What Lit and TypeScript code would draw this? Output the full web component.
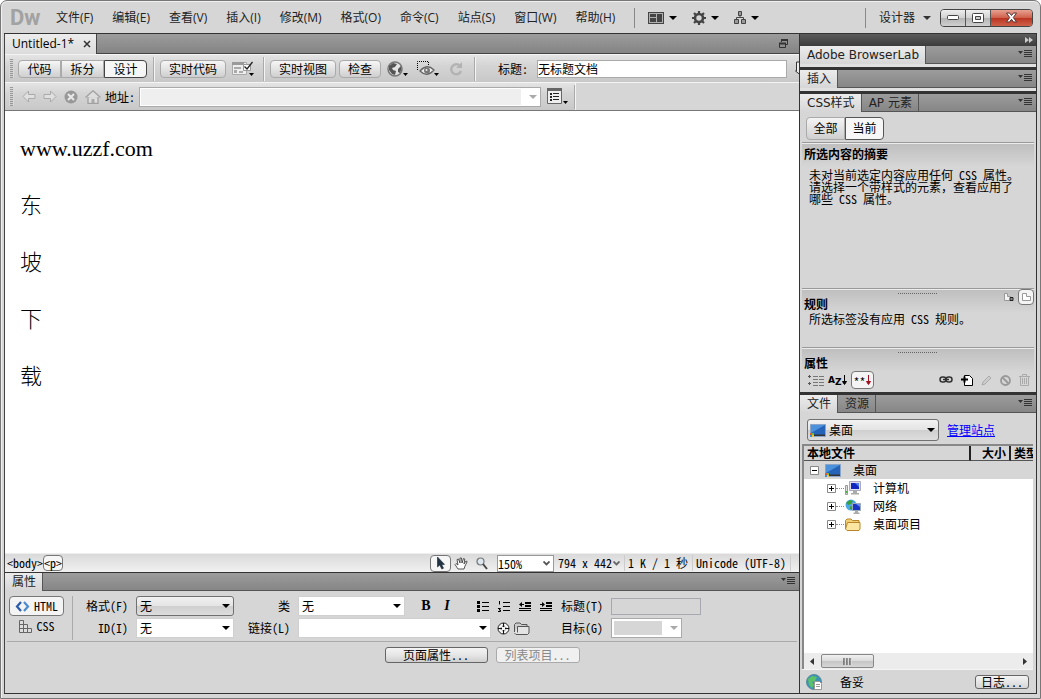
import { LitElement, html, css, svg } from "lit";
import { customElement, property, state } from "lit/decorators.js";
import { classMap } from "lit/directives/class-map.js";

const icon = (w: number, h: number, body: unknown) =>
  html`<svg width=${w} height=${h} viewBox="0 0 ${w} ${h}" aria-hidden="true">${body}</svg>`;

const down = (fill = "#000") => icon(8, 4, svg`<path d="M0 0h8L4 4z" fill=${fill} />`);
const smallDown = (x: number, y: number) => svg`<path d="M${x} ${y}h5l-2.500 3z" fill="#000" />`;

const icons = {
  layout: () => icon(16, 12, svg`<path d="M0 0h16v12H0z" fill="#444"/><path d="M1 1h14v10H1z" fill="#b0b0b0"/><path d="M2 2h6v3H2zM2 6h6v4H2zM9 2h5v8H9z" fill="#444"/>`),
  gear: () => icon(14, 14, svg`<circle cx="7" cy="7" r="4" fill="none" stroke="#444" stroke-width="2.600"/><path d="M7 0v3M7 11v3M0 7h3M11 7h3M2 2l2 2M10 10l2 2M12 2l-2 2M4 10l-2 2" stroke="#444" stroke-width="2.200"/>`),
  sitemap: () => icon(12, 13, svg`<path d="M4.500 .5h3v4h-3zM.5 8.500h4v4h-4zM7.500 8.500h4v4h-4z" fill="#999" stroke="#444"/><path d="M6 5v2M2.500 8V6.500h7V8" fill="none" stroke="#444"/>`),
  restore: () => icon(9, 9, svg`<path d="M2.500 3V1h6v4.500H7" fill="none" stroke="#333"/><path d="M2 1h7" stroke="#333" stroke-width="2"/><path d="M.5 4.500h6v4h-6z" fill="none" stroke="#333"/><path d="M0 4.500h7" stroke="#333" stroke-width="2"/>`),
  close: () => icon(8, 8, svg`<path d="M1 1l6 6M7 1L1 7" stroke="#333" stroke-width="1.500"/>`),
  check: () => icon(22, 16, svg`<path d="M.5 1.500h14v12H.5z" fill="#eee" stroke="#aaa"/><path d="M0 1h12v3H0z" fill="#999"/><path d="M2 6h7v2H2zM2 9h3v3H2zM7 10h4v2H7z" fill="#aaa"/><path d="M11.500 3.500h7v6h-7z" fill="#fff" stroke="#999"/><path d="M12.500 5.500l2.500 2.500L20.500 1" fill="none" stroke="#222" stroke-width="1.300"/>${smallDown(17, 12)}`),
  globe: () => icon(21, 16, svg`<circle cx="8" cy="8" r="7" fill="#e4e4e4" stroke="#777" stroke-width="1.500"/><path d="M2 5l4-3 4 1-2 3-3 1 1 2 3 1-1 4-3-1-3-4zM11 8l3-3 .5 3-1.500 4-2-1z" fill="#555"/>${smallDown(16, 12)}`),
  eye: () => icon(22, 16, svg`<path d="M.5 9V.5h11V4" fill="none" stroke="#000" stroke-dasharray="1 1"/><path d="M3 10Q10 2 17 9Q10 17 3 10z" fill="#eee" stroke="#666" stroke-width="1.300"/><circle cx="10" cy="9.500" r="3" fill="#777"/><circle cx="9.500" cy="9" r="1" fill="#eee"/>${smallDown(17, 12)}`),
  refresh: () => icon(14, 14, svg`<path d="M11 4A5 5 0 1 0 12 9" fill="none" stroke="#b3b3b3" stroke-width="2.500"/><path d="M13 0v6H7z" fill="#b3b3b3"/>`),
  transfer: () => icon(8, 15, svg`<path d="M3.500 1h6v9h3l-5 4-5-4h1z" fill="#eee" stroke="#333"/>`),
  back: () => icon(14, 13, svg`<path d="M1 6.500L6.500 1v3.500H13v4H6.500V12z" fill="#e0e0e0" stroke="#aaa"/>`),
  forward: () => icon(14, 13, svg`<path d="M13 6.500L7.500 1v3.500H1v4h6.500V12z" fill="#e0e0e0" stroke="#aaa"/>`),
  stop: () => icon(14, 14, svg`<circle cx="7" cy="7" r="6.500" fill="#989898"/><path d="M4 4l6 6M10 4l-6 6" stroke="#e8e8e8" stroke-width="2.200"/>`),
  home: () => icon(16, 14, svg`<path d="M3 7v6.500h10V7M.5 7.500L8 .8l7.500 6.700" fill="#dedede" stroke="#a0a0a0" stroke-width="1.300"/><path d="M6.500 9h3v4h-3z" fill="#aaa"/>`),
  listPage: () => icon(21, 17, svg`<path d="M.5 .5h14v15H.5z" fill="#eee" stroke="#666"/><path d="M0 0h15v3H0z" fill="#666"/><path d="M3 5h2v2H3zM3 8h2v2H3zM3 11h2v2H3zM6 5h6v1H6zM6 8h6v1H6zM6 11h6v1H6z" fill="#222"/>${smallDown(16, 13)}`),
  panelMenu: () => icon(14, 9, svg`<path d="M0 1h5L2.500 4zM6 0h8v1H6zM6 2h8v1H6zM6 4h8v1H6zM6 6h8v1H6z" fill="#333"/>`),
  collapse: () => icon(8, 6, svg`<path d="M0 0l4 3-4 3zM4 0l4 3-4 3z" fill="#ccc"/>`),
  ruleA: () => icon(11, 10, svg`<path d="M1.500 8.500v-7h3v3h3v4z" fill="#f4f4f4" stroke="#999"/><path d="M7 5.500h3v3H7z" fill="#888" stroke="#222"/>`),
  ruleB: () => icon(11, 10, svg`<path d="M1.500 8.500v-7h4v3h4v4z" fill="#fff" stroke="#999"/>`),
  category: () => icon(16, 11, svg`<path d="M0 1.500h3M1.500 0v3M0 8.500h3M1.500 7v3" stroke="#555"/><path d="M5 1.500h5M5 4.500h5M5 7.500h5M5 10.500h5M11 1.500h5M11 4.500h5M11 7.500h5M11 10.500h5" stroke="#777"/>`),
  arrowDown: (c: string) => icon(5, 11, svg`<path d="M2.500 0v9M.5 6.500l2 3 2-3z" stroke=${c} fill=${c}/>`),
  link: () => icon(14, 8, svg`<rect x="1" y="1" width="6" height="5" rx="2.500" fill="none" stroke="#333" stroke-width="1.500"/><rect x="7" y="1" width="6" height="5" rx="2.500" fill="none" stroke="#333" stroke-width="1.500"/><path d="M4 3.500h6" stroke="#333" stroke-width="1.500"/>`),
  newRule: () => icon(12, 11, svg`<path d="M3.500 .5h5l3 3v7h-8z" fill="#fff" stroke="#000"/><path d="M0 4.500h7M3.500 1.500v6" stroke="#000" stroke-width="2"/>`),
  pencil: () => icon(11, 11, svg`<path d="M1 10l1-3 6-6 2 2-6 6z" fill="#ccc" stroke="#aaa"/>`),
  ban: () => icon(11, 11, svg`<circle cx="5.500" cy="5.500" r="4.500" fill="none" stroke="#999" stroke-width="1.800"/><path d="M2.500 2.500l6 6" stroke="#999" stroke-width="1.800"/>`),
  trash: () => icon(11, 12, svg`<path d="M0 2.500h11M3.500 2V.5h4V2M1.500 3v8.500h8V3M3.500 4v6M5.500 4v6M7.500 4v6" fill="none" stroke="#aaa"/>`),
  monitor: () => icon(16, 13, svg`<path d="M.5 .5h15v12H.5z" fill="#2563b8" stroke="#8aa5c6"/><path d="M1 1h14L1 9z" fill="#4b91dc"/><path d="M1 10.500h14v1.500H1z" fill="#333"/><path d="M0 9h2v2H0z" fill="#e4572e"/><path d="M2 9h2v2H2z" fill="#6fbf3b"/><path d="M0 11h2v2H0z" fill="#3b8fe0"/><path d="M2 11h2v2H2z" fill="#f5c430"/>`),
  computer: () => icon(16, 14, svg`<path d="M.5 4.500h2v9h-2z" fill="#ddd" stroke="#999"/><path d="M1 10h1v2H1z" fill="#4a4"/><path d="M4.500 .5h11v9h-11z" fill="#dde" stroke="#aab"/><path d="M6 2h8v6H6z" fill="#1226c0"/><path d="M10 2h4v4z" fill="#4f7df0"/><path d="M8 10h4v2h2v1.500H6V12h2z" fill="#aaa"/>`),
  network: () => icon(16, 15, svg`<circle cx="6" cy="6" r="5.500" fill="#4aa8e8"/><path d="M1 4l4-3 3 1-2 3-3 1zM5 7l3 1-1 3-2-1z" fill="#3aa03a"/><path d="M7.500 4.500h8v7h-8z" fill="#1a36c4" stroke="#9ab"/><path d="M11 5h4v3z" fill="#6a90f4"/><path d="M10 12h3v1.500h1.500V15h-6v-1.500H10z" fill="#aaa"/>`),
  folder: () => icon(16, 13, svg`<path d="M.5 11V2.500L2 1h4l1.500 1.500H14V5" fill="#f2d078" stroke="#b8872a"/><path d="M2.500 4.500h12.500V11l-1 1.500H2L.5 11z" fill="#fbe7a2" stroke="#b8872a"/>`),
  expand: (open: boolean) => icon(9, 9, svg`<path d="M.5 .5h8v8h-8z" fill="#fff" stroke="#888"/><path d=${open ? "M2 4.500h5" : "M2 4.500h5M4.500 2v5"} stroke="#000"/>`),
  globeDoc: () => icon(17, 16, svg`<circle cx="8" cy="8" r="7.500" fill="#3a93b8" stroke="#5a8a9a"/><path d="M2 5l4-3 5 1-2 4-3 1 2 3-2 3-3-3z" fill="#5cc268"/><path d="M8.500 7.500h5l2 2v6h-7z" fill="#fff" stroke="#999"/><path d="M10 10.500h4M10 12.500h4" stroke="#999"/>`),
  htmlTag: () => icon(15, 11, svg`<path d="M6 1L2 5.500 6 10" fill="none" stroke="#2a5caa" stroke-width="2.200"/><path d="M9 1l4 4.500L9 10" fill="none" stroke="#4b8bd0" stroke-width="2.200"/>`),
  cssTag: () => icon(14, 13, svg`<path d="M1.500 .5h4v12h-4zM5.500 4.500h4v8h-4zM9.500 8.500h4v4h-4zM1.500 4.500h4M1.500 8.500h8" fill="#ddd" stroke="#666"/>`),
  pointer: () => icon(9, 14, svg`<path d="M1.500 1v10l2.300-2 2 4 1.700-.8L5.600 8.400H8.500z" fill="#234" stroke="#123" stroke-width=".6"/>`),
  hand: () => icon(14, 13, svg`<path d="M4 12L1 7.500 2 6.500l2 1.500L3 2.500l1.500-.5L6 6V1h1.500L8 6l1.500-4.500 1.300.5L10 7l2-3 1.200.6L11 9l-1 3z" fill="#fff" stroke="#444" stroke-width=".9"/>`),
  magnifier: () => icon(12, 13, svg`<circle cx="4.500" cy="4.500" r="3.500" fill="#dbe6ee" stroke="#777" stroke-width="1.200"/><path d="M7 7l4 5" stroke="#444" stroke-width="2"/>`),
  bullets: () => icon(12, 11, svg`<path d="M0 0h3v3H0zM0 4h3v3H0zM0 8h3v3H0zM5 1h7v1H5zM5 5h7v1H5zM5 9h7v1H5z" fill="#000"/>`),
  numbers: () => icon(12, 11, svg`<path d="M1.500 0v3.500M0 7.500h2.500L1 9h1.500v1.500H0" fill="none" stroke="#000"/><path d="M5 1h7v1H5zM5 5h7v1H5zM5 9h7v1H5z" fill="#000"/>`),
  outdent: () => icon(12, 9, svg`<path d="M0 2.500L3 0v2h2v1H3v2zM6 0h6v2H6zM6 3h6v2H6zM0 6h12v1H0zM0 8h12v1H0z" fill="#000"/>`),
  indent: () => icon(12, 9, svg`<path d="M5 2.500L2 0v2H0v1h2v2zM6 0h6v2H6zM6 3h6v2H6zM0 6h12v1H0zM0 8h12v1H0z" fill="#000"/>`),
  target: () => icon(13, 13, svg`<circle cx="6.500" cy="6.500" r="5.500" fill="#f4f4f4" stroke="#222"/><circle cx="6.500" cy="6.500" r="2.500" fill="none" stroke="#555" stroke-dasharray="1 1"/><path d="M6.500 1v4M6.500 8v4M1 6.500h4M8 6.500h4" stroke="#111"/>`),
  grayFolder: () => icon(16, 13, svg`<path d="M.5 10V2.500L2 1h4l1.500 1.500H13V5" fill="#ccc" stroke="#555"/><path d="M3.500 4.500H15V11l-1.500 1.500H2L.5 11" fill="#e4e4e4" stroke="#555"/><path d="M3.500 4.500v6" stroke="#555"/>`),
  scrollLeft: () => icon(4, 7, svg`<path d="M4 0v7L0 3.500z" fill="#333"/>`),
  scrollRight: () => icon(4, 7, svg`<path d="M0 0v7l4-3.500z" fill="#333"/>`),
  thumbGrip: () => icon(9, 7, svg`<path d="M1 0v7M4 0v7M7 0v7" stroke="#666" stroke-width="1.500"/><path d="M2.300 0v7M5.300 0v7M8.300 0v7" stroke="#ddd"/>`),
  minimize: () => icon(12, 6, svg`<rect x=".5" y=".5" width="11" height="4" rx="1" fill="#fff" stroke="#444"/>`),
  maximize: () => icon(12, 10, svg`<rect x=".5" y=".5" width="11" height="9" rx="1" fill="#fff" stroke="#444"/><path d="M3.500 3.500h5v3h-5z" fill="#ccc" stroke="#444"/>`),
  quit: () => icon(13, 11, svg`<path d="M1.500 1h3l2 2.500 2-2.500h3L8.300 5.500 11.500 10h-3l-2-2.700-2 2.700h-3l3.200-4.500z" fill="#fff" stroke="#533"/>`),
};

const shared = css`
  *,
  *::before,
  *::after {
    box-sizing: border-box;
  }
  :host {
    display: block;
    font-family: "Noto Sans CJK SC", sans-serif;
    font-feature-settings: "hwid";
    font-size: 12px;
    line-height: 16px;
    color: #000;
  }
  svg {
    display: block;
    flex: none;
  }
  button,
  input,
  select {
    font: inherit;
    font-feature-settings: inherit;
    color: inherit;
    margin: 0;
    padding: 0;
    border: 0;
    border-radius: 0;
    background: none;
    appearance: none;
    outline: none;
    opacity: 1;
    min-width: 0;
  }
  button {
    display: flex;
    align-items: center;
    justify-content: center;
    white-space: nowrap;
  }
  .row {
    display: flex;
    align-items: center;
  }
  .grow {
    flex: 1;
    min-width: 0;
  }
  .tabs {
    display: flex;
    height: 18px;
    background: linear-gradient(#9c9c9c, #868686);
    border-bottom: 1px solid #555;
  }
  .tab {
    height: 18px;
    padding: 0 6px 0 7px;
    color: #222;
    font-family: "DejaVu Sans", "Noto Sans CJK SC", sans-serif;
    border-right: 1px solid #555;
  }
  .tab.on {
    background: linear-gradient(#ececec, #d6d6d6);
  }
  .tabs .menu {
    margin-left: auto;
    margin-right: 4px;
  }
  .combo {
    display: grid;
    align-items: center;
  }
  .combo select,
  .combo input,
  .combo svg {
    grid-area: 1 / 1;
  }
  .combo svg {
    justify-self: end;
    margin-right: 4px;
    pointer-events: none;
  }
  .combo select,
  .combo input {
    width: 100%;
    height: 20px;
    padding: 0 16px 0 3px;
    background: #fff;
    border: 1px solid #d0d0d0;
  }
  .combo select.raised {
    background: linear-gradient(#f2f2f2, #e4e4e4 50%, #cfcfcf 52%, #dedede);
    border-color: #707070;
    border-radius: 3px;
  }
`;

@customElement("app-menubar")
class AppMenubar extends LitElement {
  static styles = [
    shared,
    css`
      .bar {
        display: flex;
        align-items: center;
        height: 31px;
        padding: 0 4px 0 6px;
        font-family: "Open Sans", "Noto Sans CJK SC", sans-serif;
      }
      .logo {
        width: 40px;
        font: 700 22px/28px Roboto, sans-serif;
        color: #a2a2a2;
      }
      .menus {
        display: flex;
        gap: 19px;
        margin: 0 6px;
      }
      .menus button,
      .role {
        color: #222;
      }
      .rule {
        width: 1px;
        height: 20px;
        margin: 0 13px;
        background: #888;
      }
      .tools {
        display: flex;
        gap: 15px;
      }
      .tools button {
        gap: 5px;
      }
      .role {
        gap: 8px;
      }
      .win {
        display: flex;
        height: 18px;
        margin-left: 9px;
        border: 1px solid #444;
        border-radius: 4px;
        overflow: hidden;
      }
      .win button {
        width: 25px;
        height: 16px;
        background: linear-gradient(#eee, #d2d2d2 48%, #b4b4b4 50%, #d0d0d0);
        border-right: 1px solid #555;
      }
      .win .quit {
        width: 41px;
        border: 0;
        background: linear-gradient(#e8a292, #d0614c 48%, #b93320 50%, #cf6048);
      }
    `,
  ];

  private menus = ["文件(F)", "编辑(E)", "查看(V)", "插入(I)", "修改(M)", "格式(O)", "命令(C)", "站点(S)", "窗口(W)", "帮助(H)"];

  render() {
    return html`
      <header class="bar">
        <span class="logo">Dw</span>
        <nav class="menus">${this.menus.map((m) => html`<button>${m}</button>`)}</nav>
        <span class="rule"></span>
        <div class="tools">
          <button aria-label="布局">${icons.layout()}${down()}</button>
          <button aria-label="扩展">${icons.gear()}${down()}</button>
          <button aria-label="站点">${icons.sitemap()}${down()}</button>
        </div>
        <span class="grow"></span>
        <span class="rule"></span>
        <button class="role">设计器 ${down("#333")}</button>
        <div class="win">
          <button aria-label="最小化">${icons.minimize()}</button>
          <button aria-label="最大化">${icons.maximize()}</button>
          <button class="quit" aria-label="关闭">${icons.quit()}</button>
        </div>
      </header>
    `;
  }
}

@customElement("app-document")
class AppDocument extends LitElement {
  @state() private view = "设计";

  static styles = [
    shared,
    css`
      :host {
        display: flex;
        flex-direction: column;
        min-height: 0;
      }
      .files {
        display: flex;
        align-items: center;
        height: 20px;
        background: linear-gradient(#9c9c9c, #848484);
        border-bottom: 1px solid #444;
      }
      .file {
        display: flex;
        align-items: center;
        gap: 9px;
        height: 20px;
        padding: 0 5px 0 7px;
        background: linear-gradient(#ececec, #dcdcdc);
        border-right: 1px solid #444;
        font-family: "Open Sans", sans-serif;
      }
      .files > svg {
        margin: 0 11px 0 auto;
      }
      .bar {
        display: flex;
        align-items: center;
        overflow: hidden;
        padding-left: 4px;
        background: linear-gradient(#e4e4e4, #d4d4d4 40%, #c8c8c8);
        border-top: 1px solid #f4f4f4;
      }
      .bar.main {
        height: 28px;
      }
      .bar.address {
        height: 29px;
        border-bottom: 1px solid #777;
      }
      .grip {
        flex: none;
        width: 5px;
        height: 19px;
        margin-right: 4px;
        background: repeating-linear-gradient(#999 0 1px, transparent 1px 2px);
        border: solid #d8d8d8;
        border-width: 0 1px;
      }
      .btn {
        flex: none;
        height: 18px;
        padding: 0 8px;
        background: linear-gradient(#f6f6f6, #cfcfcf);
        border: 1px solid #aaa;
        border-radius: 4px;
      }
      .seg {
        display: flex;
        flex: none;
      }
      .seg .btn {
        width: 43px;
        border-radius: 0;
      }
      .seg .btn:first-child {
        border-radius: 4px 0 0 4px;
      }
      .seg .btn:last-child {
        border-radius: 0 4px 4px 0;
      }
      .seg .btn.on {
        background: #f6f6f6;
        border-color: #444;
      }
      .sep {
        flex: none;
        width: 2px;
        height: 24px;
        margin: 0 5px 0 6px;
        background: #aaa;
        border-right: 1px solid #f4f4f4;
      }
      .sep.wide {
        margin-left: 9px;
      }
      .rest {
        flex: 1;
        align-self: stretch;
        margin-left: -6px;
        background: #d6d6d6;
        border-left: 1px solid #f4f4f4;
      }
      .pair {
        display: flex;
        gap: 3px;
      }
      .check {
        margin-left: 6px;
      }
      .set {
        display: flex;
        align-items: center;
        gap: 9px;
        margin-left: 6px;
      }
      .set .last {
        margin: 0 2px 0 1px;
      }
      .caption {
        flex: none;
        margin-left: 17px;
        width: 39px;
      }
      .title {
        flex: 1;
        height: 18px;
        border: 1px solid #aaa;
        background: #fff;
      }
      .clip {
        width: 6px;
        margin-left: 6px;
        overflow: hidden;
      }
      .nav {
        display: flex;
        align-items: center;
        gap: 7px;
        margin: 0 4px 0 4px;
      }
      .url {
        flex: 0 1 402px;
        margin-left: 4px;
      }
      .url input {
        background: #efefef;
        border: 2px solid #fff;
        border-right-width: 20px;
        outline: 1px solid #aaa;
        outline-offset: -1px;
      }
      .list {
        margin-left: 6px;
      }
      .page {
        flex: 1;
        min-height: 0;
        overflow: auto;
        padding: 22px 15px;
        background: #fff;
        font: 22px/32px "Liberation Serif", "Noto Sans CJK SC", serif;
        font-feature-settings: normal;
      }
      .page p {
        margin: 0 0 25px;
      }
      .zh {
        font-weight: 300;
      }
      .status {
        display: flex;
        align-items: center;
        height: 19px;
        padding: 0 5px 0 2px;
        border-top: 1px solid #eee;
        background: linear-gradient(#dadada, #f0f0f0);
        white-space: pre;
      }
      .crumb {
        height: 16px;
      }
      .crumb.on,
      .tool.on {
        background: #f6f6f6;
        border: 1px solid #777;
        border-radius: 4px;
      }
      .tool {
        width: 21px;
        height: 17px;
      }
      .zoom {
        width: 57px;
        margin: 0 4px;
      }
      .zoom select {
        height: 17px;
        padding-left: 0;
        border-color: #999;
      }
      .cell {
        display: flex;
        align-items: center;
        gap: 1px;
        padding-right: 4px;
        margin-right: 3px;
        border-right: 1px solid #ccc;
      }
    `,
  ];

  render() {
    return html`
      <div class="files">
        <div class="file"><span>Untitled-1*</span><button aria-label="关闭文档">${icons.close()}</button></div>
        ${icons.restore()}
      </div>
      <div class="bar main">
        <span class="grip"></span>
        <div class="seg">
          ${["代码", "拆分", "设计"].map(
            (v) => html`<button class=${classMap({ btn: true, on: v === this.view })} @click=${() => (this.view = v)}>${v}</button>`
          )}
        </div>
        <span class="sep"></span>
        <button class="btn">实时代码</button>
        <button class="check" aria-label="检查浏览器兼容性">${icons.check()}</button>
        <span class="sep wide"></span>
        <div class="pair"><button class="btn">实时视图</button><button class="btn">检查</button></div>
        <div class="set">
          <button aria-label="预览">${icons.globe()}</button>
          <button aria-label="可视化助理">${icons.eye()}</button>
          <button class="last" aria-label="刷新">${icons.refresh()}</button>
        </div>
        <span class="sep wide"></span>
        <label class="caption" for="title">标题:</label>
        <input class="title" id="title" value="无标题文档" />
        <span class="clip">${icons.transfer()}</span>
      </div>
      <div class="bar address">
        <span class="grip"></span>
        <div class="nav">
          <button aria-label="后退">${icons.back()}</button>
          <button aria-label="前进">${icons.forward()}</button>
          <button aria-label="停止">${icons.stop()}</button>
          <button aria-label="主页">${icons.home()}</button>
        </div>
        <label for="url">地址:</label>
        <div class="combo url"><input id="url" />${down("#aaa")}</div>
        <button class="list" aria-label="选项">${icons.listPage()}</button>
        <span class="sep"></span>
        <span class="rest"></span>
      </div>
      <main class="page">
        <p>www.uzzf.com</p>
        ${["东", "坡", "下", "载"].map((c) => html`<p class="zh">${c}</p>`)}
      </main>
      <div class="status">
        <button class="crumb">&lt;body&gt;</button><button class="crumb on">&lt;p&gt;</button>
        <span class="grow"></span>
        <button class="tool on" aria-label="选取">${icons.pointer()}</button>
        <button class="tool" aria-label="手形">${icons.hand()}</button>
        <button class="tool" aria-label="缩放">${icons.magnifier()}</button>
        <div class="combo zoom">
          <select aria-label="缩放比率"><option>150%</option></select>
          ${icon(7, 5, svg`<path d="M.5 .5l3 3 3-3" fill="none" stroke="#555" stroke-width="1.800"/>`)}
        </div>
        <button class="cell">794 x 442${icon(7, 5, svg`<path d="M.5 .5l3 3 3-3" fill="none" stroke="#666" stroke-width="1.800"/>`)}</button>
        <span class="cell">1 K / 1 秒</span>
        <span class="cell">Unicode (UTF-8)</span>
      </div>
    `;
  }
}

@customElement("app-properties")
class AppProperties extends LitElement {
  static styles = [
    shared,
    css`
      .panel {
        height: 102px;
      }
      .form {
        display: flex;
        height: 51px;
        margin: 0 2px;
        padding-top: 5px;
        border-bottom: 1px solid #aaa;
      }
      .modes {
        display: flex;
        flex-direction: column;
        width: 66px;
        height: 44px;
        padding-left: 2px;
        margin-right: 5px;
        border-right: 1px solid #aaa;
      }
      .mode {
        width: 55px;
        height: 20px;
        gap: 4px;
        border: 1px solid transparent;
      }
      .mode.on {
        background: #f4f4f4;
        border-color: #777;
        border-radius: 4px;
      }
      .group {
        display: grid;
        grid-template-rows: 20px 20px;
        row-gap: 2px;
        column-gap: 8px;
        align-items: center;
        white-space: nowrap;
      }
      .group > label {
        text-align: right;
      }
      .basic {
        grid-template-columns: 50px 98px;
      }
      .links {
        grid-template-columns: 56px 255px;
      }
      .extra {
        grid-template-columns: 50px 90px;
      }
      .class {
        width: 107px;
        margin-right: 15px;
      }
      .href {
        width: 193px;
        margin-right: 6px;
      }
      .style {
        width: 12px;
        margin-right: 9px;
        font: 700 14px/16px "Liberation Serif", serif;
      }
      .style.i {
        font-style: italic;
        margin-right: 24px;
      }
      .lists {
        display: flex;
        align-items: center;
        gap: 9px;
      }
      .files {
        display: flex;
        align-items: center;
        gap: 4px;
      }
      .caption {
        width: 90px;
        height: 17px;
        border: 1px solid #a8a8b0;
      }
      .dest {
        width: 71px;
      }
      .dest select {
        background: #d6d6d6;
        border: 3px solid #fff;
        border-right-width: 20px;
        outline: 1px solid #aaa;
        outline-offset: -1px;
        opacity: 1;
      }
      .actions {
        display: flex;
        justify-content: center;
        gap: 8px;
        margin-top: 5px;
        padding-left: 160px;
      }
      .action {
        width: 103px;
        height: 16px;
        border: 1px solid #666;
        border-radius: 3px;
        background: linear-gradient(#f4f4f4, #e6e6e6 50%, #cfcfcf);
      }
      .action:disabled {
        width: 84px;
        color: #888;
        border-color: #aaa;
        background: #f0f0f0;
      }
    `,
  ];

  render() {
    return html`
      <div class="tabs row">
        <button class="tab on">属性</button>
        <button class="menu" aria-label="面板菜单">${icons.panelMenu()}</button>
      </div>
      <section class="panel">
        <div class="form">
          <div class="modes">
            <button class="mode on">${icons.htmlTag()}HTML</button>
            <button class="mode">${icons.cssTag()}CSS</button>
          </div>
          <div class="group basic">
            <label for="format">格式(F)</label>
            <div class="combo"><select id="format" class="raised"><option>无</option></select>${down()}</div>
            <label for="ident">ID(I)</label>
            <div class="combo"><select id="ident"><option>无</option></select>${down()}</div>
          </div>
          <div class="group links">
            <label for="cls">类</label>
            <div class="row">
              <div class="combo class"><select id="cls"><option>无</option></select>${down()}</div>
              <button class="style">B</button><button class="style i">I</button>
              <div class="lists">
                <button aria-label="项目列表">${icons.bullets()}</button>
                <button aria-label="编号列表">${icons.numbers()}</button>
                <button aria-label="凸出">${icons.outdent()}</button>
                <button aria-label="缩进">${icons.indent()}</button>
              </div>
            </div>
            <label for="href">链接(L)</label>
            <div class="row">
              <div class="combo href"><input id="href" />${down()}</div>
              <div class="files">
                <button aria-label="指向文件">${icons.target()}</button>
                <button aria-label="浏览文件">${icons.grayFolder()}</button>
              </div>
            </div>
          </div>
          <div class="group extra">
            <label for="caption">标题(T)</label>
            <input id="caption" class="caption" disabled />
            <label for="dest">目标(G)</label>
            <div class="combo dest"><select id="dest" disabled></select>${down("#aaa")}</div>
          </div>
        </div>
        <div class="actions">
          <button class="action">页面属性...</button>
          <button class="action" disabled>列表项目...</button>
        </div>
      </section>
    `;
  }
}

@customElement("app-tabstrip")
class AppTabstrip extends LitElement {
  @property({ attribute: false }) tabs: string[] = [];

  static styles = [shared];

  render() {
    return html`
      <div class="tabs row">
        ${this.tabs.map((t, i) => html`<button class=${classMap({ tab: true, on: i === 0 })}>${t}</button>`)}
        <button class="menu" aria-label="面板菜单">${icons.panelMenu()}</button>
      </div>
    `;
  }
}

@customElement("app-dock")
class AppDock extends LitElement {
  static styles = [
    shared,
    css`
      :host {
        display: flex;
        flex-direction: column;
        border: solid #333;
        border-width: 0 1px;
        background: #d6d6d6;
      }
      .head {
        display: flex;
        align-items: center;
        justify-content: flex-end;
        height: 12px;
        padding-right: 3px;
        background: linear-gradient(#5c5c5c, #3c3c3c);
      }
      .folded {
        height: 24px;
        border-bottom: 3px solid #333;
        background: #e0e0e0;
      }
      .styles {
        display: flex;
        flex-direction: column;
        height: 301px;
        border-bottom: 3px solid #333;
      }
      .seg {
        display: flex;
        padding: 5px 6px 2px;
      }
      .seg button {
        width: 39px;
        height: 23px;
        padding-bottom: 2px;
        background: linear-gradient(#f4f4f4, #cfcfcf);
        border: 1px solid #aaa;
        border-radius: 4px 0 0 4px;
      }
      .seg .on {
        background: #f6f6f6;
        border-color: #555;
        border-radius: 0 4px 4px 0;
      }
      .sect {
        margin: 0 2px;
        border-top: 1px solid #999;
        background: linear-gradient(#bebebe, #d6d6d6 24px);
        box-shadow: inset 0 1px #ececec;
      }
      h3 {
        margin: 0;
        padding-left: 2px;
        font-size: 12px;
        line-height: 16px;
      }
      p {
        margin: 0;
        padding: 0 12px 0 7px;
        line-height: 12px;
      }
      .full {
        font-feature-settings: normal;
      }
      .summary {
        flex: 1;
        padding-top: 3px;
      }
      .summary p {
        padding-top: 7px;
      }
      .handle {
        display: block;
        width: 40px;
        height: 1px;
        margin: 4px auto 2px;
        background: repeating-linear-gradient(90deg, #666 0 1px, transparent 1px 2px);
      }
      .rules {
        height: 59px;
      }
      .rules .top {
        display: flex;
        align-items: center;
        justify-content: space-between;
        height: 16px;
      }
      .rules .pair {
        display: flex;
        align-items: center;
        align-self: flex-end;
        gap: 4px;
        margin-bottom: 7px;
      }
      .rules .on,
      .all {
        background: #f4f4f4;
        border: 1px solid #777;
        border-radius: 4px;
      }
      .rules .on {
        width: 16px;
        height: 16px;
      }
      .rules p {
        padding-top: 1px;
      }
      .attrs {
        height: 45px;
      }
      .acts {
        display: flex;
        align-items: center;
        gap: 4px;
        height: 18px;
        padding: 0 4px 0 6px;
      }
      .acts .all {
        width: 23px;
        height: 18px;
      }
      .acts .az {
        font: 700 9px/12px "DejaVu Sans", sans-serif;
      }
      .acts .z {
        padding-top: 3px;
      }
      .acts .star {
        padding-top: 3px;
      }
      .acts .edit {
        display: flex;
        align-items: center;
        gap: 8px;
        margin-left: auto;
      }
      .site {
        display: flex;
        align-items: center;
        gap: 8px;
        padding: 6px 7px 3px;
      }
      .drive {
        flex: 0 1 132px;
      }
      .drive select {
        height: 22px;
        padding-left: 21px;
      }
      .drive .lead svg {
        margin: 0;
      }
      .drive .lead {
        grid-area: 1 / 1;
        justify-self: start;
        z-index: 1;
        padding-left: 3px;
        pointer-events: none;
      }
      a {
        color: #00f;
      }
      .tree {
        display: flex;
        flex-direction: column;
        flex: 1;
        min-height: 0;
        margin: 0 3px 0 2px;
        border: 2px solid #888;
        border-width: 2px 0 0 2px;
        background: #fff;
        overflow: hidden;
      }
      table {
        width: 100%;
        table-layout: fixed;
        border-collapse: separate;
        border-spacing: 0;
      }
      th {
        padding: 0 0 0 3px;
        line-height: 14px;
        text-align: left;
        background: #d6d6d6;
        border-right: 2px solid #222;
        border-bottom: 1px solid #555;
        white-space: nowrap;
      }
      th:last-child {
        border-right: 0;
      }
      .size {
        width: 40px;
        padding: 0 3px 0 0;
        text-align: right;
      }
      .kind {
        width: 22px;
      }
      td {
        padding: 0;
      }
      .node {
        display: flex;
        align-items: center;
        height: 18px;
        padding-left: 23px;
      }
      .node.root {
        padding-left: 6px;
        background: #d6d6d6;
      }
      .wire {
        width: 8px;
        border-top: 1px dotted #888;
        margin-right: 1px;
      }
      .root .wire {
        width: 6px;
        margin: 0;
        border: 0;
      }
      .name {
        padding-left: 12px;
      }
      .scroll {
        display: flex;
        align-items: center;
        height: 16px;
        margin-top: auto;
        padding: 0 6px;
        background: #ececec;
      }
      .thumb {
        width: 53px;
        height: 14px;
        margin: 0 auto 0 7px;
        border: 1px solid #888;
        border-radius: 2px;
        background: linear-gradient(#f0f0f0, #dcdcdc 48%, #c4c4c4 50%, #d6d6d6);
      }
      .foot {
        display: flex;
        align-items: center;
        height: 24px;
        margin: 0 3px 0 2px;
        padding: 0 4px;
        border-top: 1px solid #f4f4f4;
      }
      .foot span {
        flex: 1;
        padding-left: 17px;
      }
      .log {
        width: 54px;
        height: 14px;
        border: 1px solid #666;
        border-radius: 3px;
        background: linear-gradient(#f4f4f4, #d6d6d6);
      }
    `,
  ];

  private nodes = [
    { name: "计算机", art: icons.computer },
    { name: "网络", art: icons.network },
    { name: "桌面项目", art: icons.folder },
  ];

  render() {
    return html`
      <div class="head">${icons.collapse()}</div>
      <div class="folded"><app-tabstrip .tabs=${["Adobe BrowserLab"]}></app-tabstrip></div>
      <div class="folded"><app-tabstrip .tabs=${["插入"]}></app-tabstrip></div>
      <section class="styles">
        <app-tabstrip .tabs=${["CSS样式", "AP 元素"]}></app-tabstrip>
        <div class="seg"><button>全部</button><button class="on">当前</button></div>
        <div class="sect summary">
          <h3>所选内容的摘要</h3>
          <p>未对当前选定内容应用任何 CSS 属性。<br /><span class="full">请选择一个带样式的元素，查看应用了</span><br />哪些 CSS 属性。</p>
        </div>
        <div class="sect rules">
          <span class="handle"></span>
          <div class="top">
            <h3>规则</h3>
            <div class="pair">
              <button aria-label="显示信息">${icons.ruleA()}</button>
              <button class="on" aria-label="显示层叠">${icons.ruleB()}</button>
            </div>
          </div>
          <p>所选标签没有应用 CSS 规则。</p>
        </div>
        <div class="sect attrs">
          <span class="handle"></span>
          <h3>属性</h3>
          <div class="acts">
            <button aria-label="类别视图">${icons.category()}</button>
            <button class="az" aria-label="列表视图">A<span class="z">Z</span>${icons.arrowDown("#000")}</button>
            <button class="all" aria-label="已设置属性"><span class="star">**</span>${icons.arrowDown("#a01020")}</button>
            <div class="edit">
              <button aria-label="附加样式表">${icons.link()}</button>
              <button aria-label="新建规则">${icons.newRule()}</button>
              <button aria-label="编辑规则">${icons.pencil()}</button>
              <button aria-label="禁用">${icons.ban()}</button>
              <button aria-label="删除">${icons.trash()}</button>
            </div>
          </div>
        </div>
      </section>
      <app-tabstrip .tabs=${["文件", "资源"]}></app-tabstrip>
      <div class="site">
        <div class="combo drive">
          <span class="lead">${icons.monitor()}</span>
          <select class="raised" aria-label="站点"><option>桌面</option></select>
          ${down()}
        </div>
        <a href="#">管理站点</a>
      </div>
      <div class="tree">
        <table>
          <thead>
            <tr><th>本地文件</th><th class="size">大小</th><th class="kind">类型</th></tr>
          </thead>
          <tbody>
            <tr><td colspan="3"><div class="node root">${icons.expand(true)}<span class="wire"></span>${icons.monitor()}<span class="name">桌面</span></div></td></tr>
            ${this.nodes.map(
              (n) => html`<tr><td colspan="3"><div class="node">${icons.expand(false)}<span class="wire"></span>${n.art()}<span class="name">${n.name}</span></div></td></tr>`
            )}
          </tbody>
        </table>
        <div class="scroll">
          ${icons.scrollLeft()}<button class="thumb" aria-label="滚动">${icons.thumbGrip()}</button>${icons.scrollRight()}
        </div>
      </div>
      <footer class="foot">${icons.globeDoc()}<span>备妥</span><button class="log">日志...</button></footer>
    `;
  }
}

@customElement("app-root")
class AppRoot extends LitElement {
  static styles = [
    shared,
    css`
      :host {
        height: 100vh;
        background: #fff;
      }
      .window {
        display: flex;
        flex-direction: column;
        height: 100%;
        padding: 1px 3px 4px;
        background: #d6d6d6;
        border: 1px solid #777;
        border-radius: 7px 7px 0 0;
        box-shadow: inset 0 1px #f0f0f0, inset 1px 0 #f0f0f0;
      }
      .body {
        display: grid;
        grid-template-columns: minmax(0, 1fr) 238px;
        flex: 1;
        min-height: 0;
        border: solid #333;
        border-width: 1px 0;
      }
      .left {
        display: flex;
        flex-direction: column;
        min-height: 0;
        border-left: 1px solid #444;
      }
      app-document {
        flex: 1;
      }
      app-properties {
        border-top: 1px solid #333;
      }
    `,
  ];

  render() {
    return html`
      <div class="window">
        <app-menubar></app-menubar>
        <div class="body">
          <div class="left">
            <app-document></app-document>
            <app-properties></app-properties>
          </div>
          <app-dock></app-dock>
        </div>
      </div>
    `;
  }
}
